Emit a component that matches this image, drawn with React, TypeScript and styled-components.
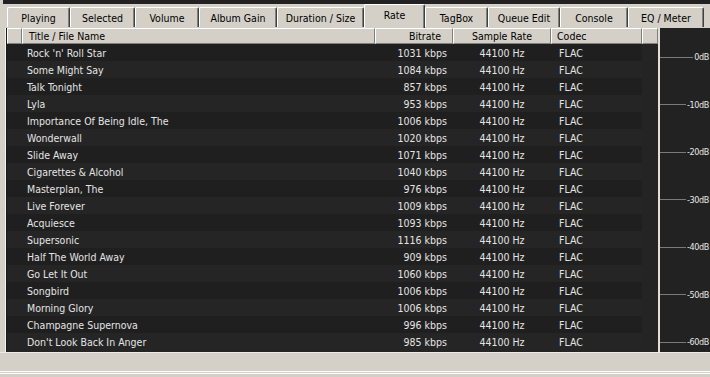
import React from "react";
import styled, { createGlobalStyle } from "styled-components";

const GlobalStyle = createGlobalStyle`
  html, body { margin: 0; padding: 0; background: #d4d0c8; }
  body { font-family: "DejaVu Sans Condensed", "Liberation Sans", sans-serif; }
`;

const FONT = `"DejaVu Sans Condensed", "Liberation Sans", sans-serif`;

const Root = styled.div`
  width: 710px;
  height: 377px;
  overflow: hidden;
  background: #d4d0c8;
  display: flex;
  flex-direction: column;
  font-family: ${FONT};
  font-size: 10.5px;
`;

const TopStrip = styled.div`
  height: 4px;
  flex: none;
  background: #222;
  border-left: 3px solid #d4d0c8;
`;

const TabBar = styled.div`
  height: 24px;
  flex: none;
  display: flex;
  align-items: flex-end;
  border-left: 4px solid #d4d0c8;
  box-sizing: border-box;
  padding-left: 3px;
`;

const Tab = styled.div<{ $w: number; $active?: boolean }>`
  width: ${(p) => p.$w}px;
  height: ${(p) => (p.$active ? 24 : 20)}px;
  box-sizing: border-box;
  margin-bottom: ${(p) => (p.$active ? 0 : 1)}px;
  background: #d4d0c8;
  border-top: 1px solid #ffffff;
  border-left: 1px solid #ffffff;
  border-right: 1px solid #404040;
  box-shadow: inset -1px 0 0 #808080;
  border-radius: 2px 2px 0 0;
  display: flex;
  align-items: center;
  justify-content: center;
  padding-bottom: ${(p) => (p.$active ? 3 : 0)}px;
  color: #000;
  font-size: 10.5px;
  white-space: nowrap;
`;

const Body = styled.div`
  height: 324px;
  flex: none;
  display: flex;
`;

const Gutter = styled.div`
  width: 6px;
  flex: none;
  box-sizing: border-box;
  border-right: 1px solid #f4f4f0;
  border-left: 4px solid #d4d0c8;
  background: #d4d0c8;
`;

const ListPanel = styled.div`
  width: 652px;
  flex: none;
  box-sizing: border-box;
  border-left: 1px solid #1a1a1a;
  background: #242424;
  display: flex;
  flex-direction: column;
`;

const Header = styled.div`
  height: 16px;
  flex: none;
  display: flex;
  background: #d4d0c8;
`;

const HeadCell = styled.div<{ $w?: number; $align?: string; $pad?: string }>`
  ${(p) => (p.$w ? `width: ${p.$w}px; flex: none;` : "flex: 1;")}
  box-sizing: border-box;
  border-left: 1px solid #ffffff;
  border-top: 1px solid #ffffff;
  border-right: 1px solid #808080;
  border-bottom: 1px solid #808080;
  display: flex;
  align-items: center;
  justify-content: ${(p) => p.$align || "flex-start"};
  padding: ${(p) => p.$pad || "0"};
  color: #000;
  white-space: nowrap;
`;

const Rows = styled.div`
  display: flex;
  flex-direction: column;
`;

const Row = styled.div<{ $alt: boolean }>`
  width: 635px;
  height: 17px;
  display: flex;
  background: ${(p) => (p.$alt ? "#252525" : "#1f1f1f")};
  color: #e4e4e4;
`;

const Cell = styled.div<{ $w: number; $align?: string; $pad?: string }>`
  width: ${(p) => p.$w}px;
  flex: none;
  box-sizing: border-box;
  display: flex;
  align-items: center;
  justify-content: ${(p) => p.$align || "flex-start"};
  padding: ${(p) => p.$pad || "0"};
  white-space: nowrap;
  overflow: hidden;
`;

const Divider = styled.div`
  width: 2px;
  flex: none;
  background: #e4e0d8;
`;

const Meter = styled.div`
  flex: 1;
  background: #222222;
  display: flex;
  flex-direction: column;
  justify-content: space-between;
  padding: 24px 1px 5px 0;
  box-sizing: border-box;
`;

const Tick = styled.div`
  height: 10px;
  display: flex;
  align-items: center;
  gap: 1px;
`;

const TickLine = styled.div`
  flex: 1;
  height: 1px;
  background: #7a7a7a;
`;

const TickLabel = styled.span`
  font-size: 9px;
  color: #e6e6e6;
  letter-spacing: -0.4px;
`;

const Bottom = styled.div`
  flex: 1;
  display: flex;
  flex-direction: column;
  border-top: 1px solid #ecebe6;
`;

const BottomSpacer = styled.div`
  height: 18px;
  flex: none;
`;

const StatusBar = styled.div`
  flex: 1;
  border-top: 1px solid #ffffff;
  box-shadow: inset 0 1px 0 #d4d0c8, inset 0 2px 0 #ffffff;
`;

const tabs: [string, number][] = [
  ["Playing", 63],
  ["Selected", 65],
  ["Volume", 64],
  ["Album Gain", 78],
  ["Duration / Size", 87],
  ["Rate", 61],
  ["TagBox", 63],
  ["Queue Edit", 72],
  ["Console", 68],
  ["EQ / Meter", 76],
];

const tracks: [string, number][] = [
  ["Rock 'n' Roll Star", 1031],
  ["Some Might Say", 1084],
  ["Talk Tonight", 857],
  ["Lyla", 953],
  ["Importance Of Being Idle, The", 1006],
  ["Wonderwall", 1020],
  ["Slide Away", 1071],
  ["Cigarettes & Alcohol", 1040],
  ["Masterplan, The", 976],
  ["Live Forever", 1009],
  ["Acquiesce", 1093],
  ["Supersonic", 1116],
  ["Half The World Away", 909],
  ["Go Let It Out", 1060],
  ["Songbird", 1006],
  ["Morning Glory", 1006],
  ["Champagne Supernova", 996],
  ["Don't Look Back In Anger", 985],
];

const ticks = ["0dB", "-10dB", "-20dB", "-30dB", "-40dB", "-50dB", "-60dB"];

export default function App() {
  return (
    <>
      <GlobalStyle />
      <Root>
        <TopStrip />
        <TabBar>
          {tabs.map(([t, w]) => (
            <Tab key={t} $w={w} $active={t === "Rate"}>
              {t}
            </Tab>
          ))}
        </TabBar>
        <Body>
          <Gutter />
          <ListPanel>
            <Header>
              <HeadCell $w={15} />
              <HeadCell $w={353} $pad="0 0 0 6px">
                Title / File Name
              </HeadCell>
              <HeadCell $w={78} $align="flex-end" $pad="0 11px 0 0">
                Bitrate
              </HeadCell>
              <HeadCell $w={98} $align="center">
                Sample Rate
              </HeadCell>
              <HeadCell $w={91} $pad="0 0 0 5px">
                Codec
              </HeadCell>
              <HeadCell />
            </Header>
            <Rows>
              {tracks.map(([title, kbps], i) => (
                <Row key={title} $alt={i % 2 === 1}>
                  <Cell $w={15} />
                  <Cell $w={353} $pad="0 0 0 5px">
                    {title}
                  </Cell>
                  <Cell $w={78} $align="flex-end" $pad="0 6px 0 0">
                    {kbps} kbps
                  </Cell>
                  <Cell $w={98} $align="center">
                    44100 Hz
                  </Cell>
                  <Cell $w={91} $pad="0 0 0 8px">
                    FLAC
                  </Cell>
                </Row>
              ))}
            </Rows>
          </ListPanel>
          <Divider />
          <Meter>
            {ticks.map((t) => (
              <Tick key={t}>
                <TickLine />
                <TickLabel>{t}</TickLabel>
              </Tick>
            ))}
          </Meter>
        </Body>
        <Bottom>
          <BottomSpacer />
          <StatusBar />
        </Bottom>
      </Root>
    </>
  );
}
